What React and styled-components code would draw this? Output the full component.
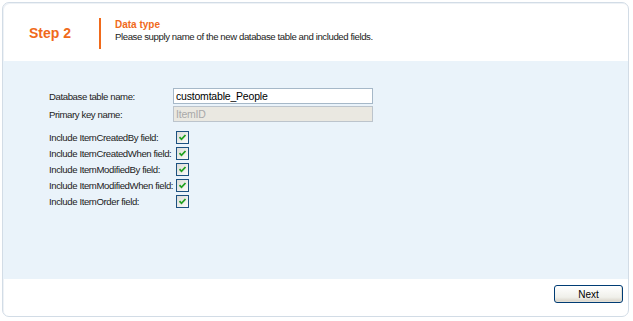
import React from 'react';
import styled, { createGlobalStyle } from 'styled-components';

const GlobalStyle = createGlobalStyle`
  html, body {
    margin: 0;
    padding: 0;
    background: #ffffff;
  }
  body {
    font-family: "Liberation Sans", Arial, sans-serif;
    font-size: 9.6px;
    letter-spacing: -0.4px;
    color: #000;
  }
`;

const Panel = styled.div`
  margin: 2px 2px 0 2px;
  width: 627px;
  height: 315px;
  box-sizing: border-box;
  border: 1px solid #d2dce6;
  border-radius: 7px;
  box-shadow: inset 1px 1px 0 #eef2f6;
  display: flex;
  flex-direction: column;
  overflow: hidden;
  background: #fff;
`;

const Header = styled.div`
  height: 58px;
  display: flex;
  align-items: center;
  padding-left: 26px;
  box-sizing: border-box;
`;

const StepTitle = styled.div`
  width: 70px;
  color: #f06a1b;
  font-size: 14px;
  letter-spacing: 0;
  font-weight: bold;
  padding-top: 1px;
`;

const Divider = styled.div`
  width: 2px;
  height: 31px;
  background: #f06a1b;
  margin-right: 14px;
  margin-top: 2px;
`;

const HeaderText = styled.div`
  display: flex;
  flex-direction: column;
  margin-top: -3px;
`;

const SectionTitle = styled.div`
  color: #f06a1b;
  font-weight: bold;
  font-size: 10px;
  letter-spacing: 0;
  line-height: 12px;
`;

const Description = styled.div`
  color: #222;
  line-height: 12px;
`;

const Content = styled.div`
  height: 218px;
  background: #eaf3fa;
  padding: 27px 0 0 46px;
  box-sizing: border-box;
`;

const Form = styled.div`
  display: grid;
  grid-template-columns: 124px 200px;
  row-gap: 2px;
`;

const Label = styled.div`
  display: flex;
  align-items: center;
  white-space: nowrap;
  height: ${p => (p.$check ? '14px' : '16px')};
  margin-top: ${p => (p.$gap ? '6px' : '0')};
  color: #222;
`;

const TextInput = styled.input`
  box-sizing: border-box;
  width: 200px;
  height: 16px;
  margin: 0;
  padding: 0 2px;
  border: 1px solid ${p => (p.disabled ? '#bcc4cc' : '#a6b8c8')};
  background: ${p => (p.disabled ? '#eae8e1' : '#fff')};
  color: ${p => (p.disabled ? '#a9a9a9' : '#000')};
  font-family: "Liberation Sans", Arial, sans-serif;
  font-size: 10.5px;
  letter-spacing: -0.2px;
  outline: none;
  &:disabled {
    -webkit-text-fill-color: #a9a9a9;
  }
`;

const CheckCell = styled.div`
  display: flex;
  align-items: center;
  height: 14px;
  padding-left: 3px;
  margin-top: ${p => (p.$gap ? '6px' : '0')};
`;

const CheckBox = styled.span`
  width: 11px;
  height: 11px;
  border: 1px solid #1c5180;
  background: linear-gradient(135deg, #dcdcd7 0%, #fbfbf9 100%);
  display: flex;
  align-items: center;
  justify-content: center;
`;

const Footer = styled.div`
  flex: 1;
  display: flex;
  justify-content: flex-end;
  align-items: flex-start;
  padding: 6px 5px 0 0;
`;

const NextButton = styled.button`
  width: 69px;
  height: 18px;
  border: 1px solid #003c74;
  border-radius: 3px;
  background: linear-gradient(#ffffff 0%, #f0f0ea 70%, #d6d0c5 100%);
  font-family: "Liberation Sans", Arial, sans-serif;
  font-size: 10px;
  color: #000;
  padding: 0;
  box-shadow: inset -1px -1px 0 #e3e0d6;
`;

const Check = () => (
  <svg width="9" height="9" viewBox="0 0 9 9">
    <path d="M1.5 4.2 L3.5 6.3 L7.5 2" fill="none" stroke="#21a121" strokeWidth="1.8" />
  </svg>
);

const options = [
  'Include ItemCreatedBy field:',
  'Include ItemCreatedWhen field:',
  'Include ItemModifiedBy field:',
  'Include ItemModifiedWhen field:',
  'Include ItemOrder field:',
];

export default function App() {
  return (
    <>
      <GlobalStyle />
      <Panel>
        <Header>
          <StepTitle>Step 2</StepTitle>
          <Divider />
          <HeaderText>
            <SectionTitle>Data type</SectionTitle>
            <Description>Please supply name of the new database table and included fields.</Description>
          </HeaderText>
        </Header>
        <Content>
          <Form>
            <Label>Database table name:</Label>
            <TextInput defaultValue="customtable_People" />
            <Label>Primary key name:</Label>
            <TextInput defaultValue="ItemID" disabled />
            {options.map((text, i) => (
              <React.Fragment key={text}>
                <Label $check $gap={i === 0}>{text}</Label>
                <CheckCell $gap={i === 0}>
                  <CheckBox><Check /></CheckBox>
                </CheckCell>
              </React.Fragment>
            ))}
          </Form>
        </Content>
        <Footer>
          <NextButton>Next</NextButton>
        </Footer>
      </Panel>
    </>
  );
}
